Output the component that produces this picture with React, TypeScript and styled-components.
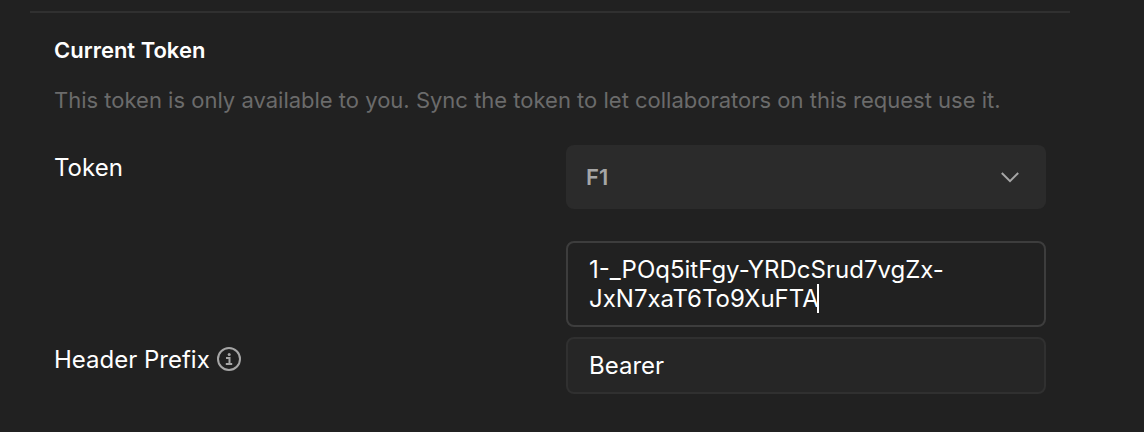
import React, { useState } from "react";
import styled, { createGlobalStyle, css } from "styled-components";

const GlobalStyle = createGlobalStyle`
  *, *::before, *::after { box-sizing: border-box; }
  body {
    margin: 0;
    background: #212121;
    color: #ffffff;
    font-family: Inter, "Liberation Sans", sans-serif;
  }
`;

const Panel = styled.main`
  padding: 11px 74px 38px 30px;
`;

const Section = styled.section`
  border-top: 2px solid #303030;
  padding: 23px 24px 0;
`;

const Heading = styled.h2`
  margin: 0;
  font-size: 22px;
  line-height: 28px;
  font-weight: 600;
`;

const Description = styled.p`
  margin: 20px 0 0;
  font-size: 22px;
  line-height: 32px;
  color: #6b6b6b;
`;

const Form = styled.form`
  display: grid;
  gap: 10px;
  margin-top: 29px;
`;

const Row = styled.div`
  display: grid;
  grid-template-columns: 1fr 1fr;
  column-gap: 32px;
  align-items: start;
`;

const LabelCell = styled.div`
  display: flex;
  align-items: start;
  gap: 7px;
  padding-top: 8px;
`;

const Label = styled.label`
  font-size: 24px;
  line-height: 29px;
`;

const Stack = styled.div`
  display: grid;
  gap: 32px;
`;

const FieldWrap = styled.div`
  position: relative;
  display: grid;
`;

const Select = styled.select`
  appearance: none;
  width: 100%;
  margin: 0;
  padding: 16px 60px 16px 20px;
  border: 0;
  border-radius: 8px;
  background: #2b2b2b;
  color: #a6a6a6;
  font-family: inherit;
  font-size: 22px;
  line-height: 32px;
  font-weight: 600;
  outline: none;
`;

const Chevron = styled.svg`
  position: absolute;
  right: 24px;
  top: 20px;
  pointer-events: none;
`;

const fieldStyle = css`
  width: 100%;
  margin: 0;
  padding: 12px 21px;
  border-radius: 8px;
  color: #ffffff;
  font-family: inherit;
  font-size: 24px;
  line-height: 29px;
  outline: none;
`;

const TokenArea = styled.textarea`
  ${fieldStyle}
  display: block;
  border: 2px solid #3d3d3d;
  background: #212121;
  caret-color: transparent;
  resize: none;
  overflow: hidden;
`;

const Caret = styled.span`
  position: absolute;
  left: 251px;
  top: 43px;
  width: 2px;
  height: 29px;
  background: #ffffff;
  pointer-events: none;
`;

const TextInput = styled.input`
  ${fieldStyle}
  border: 2px solid #303030;
  background: #262626;
`;

const InfoButton = styled.button`
  display: flex;
  padding: 2px 0;
  border: 0;
  background: none;
  color: #a6a6a6;
`;

export default function App() {
  const [token, setToken] = useState("1-_POq5itFgy-YRDcSrud7vgZx-JxN7xaT6To9XuFTA");
  const [prefix, setPrefix] = useState("Bearer");

  return (
    <>
      <GlobalStyle />
      <Panel>
        <Section>
          <Heading>Current Token</Heading>
          <Description>
            This token is only available to you. Sync the token to let collaborators on this request use it.
          </Description>
          <Form>
            <Row>
              <LabelCell>
                <Label htmlFor="token-name">Token</Label>
              </LabelCell>
              <Stack>
                <FieldWrap>
                  <Select id="token-name" defaultValue="F1">
                    <option>F1</option>
                  </Select>
                  <Chevron width="24" height="24" viewBox="0 0 24 24" fill="none" stroke="#a6a6a6" strokeWidth="2" aria-hidden="true">
                    <path d="M3.8 8 12 16.2 20.2 8" />
                  </Chevron>
                </FieldWrap>
                <FieldWrap>
                  <TokenArea
                    aria-label="Token value"
                    rows={2}
                    spellCheck={false}
                    value={token}
                    onChange={(e) => setToken(e.target.value)}
                  />
                  <Caret />
                </FieldWrap>
              </Stack>
            </Row>
            <Row>
              <LabelCell>
                <Label htmlFor="header-prefix">Header Prefix</Label>
                <InfoButton type="button" aria-label="About the header prefix">
                  <svg width="24" height="24" viewBox="0 0 24 24" fill="none" stroke="currentColor" aria-hidden="true">
                    <circle cx="12" cy="12" r="11" strokeWidth="2" />
                    <path d="M9 11H12.5V17M8.8 17H15.2" strokeWidth="2" />
                    <circle cx="12.2" cy="7.4" r="1.5" fill="currentColor" stroke="none" />
                  </svg>
                </InfoButton>
              </LabelCell>
              <TextInput
                id="header-prefix"
                type="text"
                value={prefix}
                onChange={(e) => setPrefix(e.target.value)}
              />
            </Row>
          </Form>
        </Section>
      </Panel>
    </>
  );
}
